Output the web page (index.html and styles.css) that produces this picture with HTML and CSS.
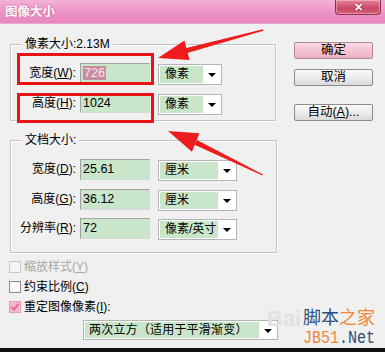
FILE: index.html
```html
<!DOCTYPE html>
<html lang="zh">
<head>
<meta charset="utf-8">
<link rel="stylesheet" href="styles.css">
</head>
<body>
<div class="dialog">
  <div class="titlebar">
    <span class="title">图像大小</span>
    <span class="close">✕</span>
  </div>
  <div class="content">
    <div class="main">
      <div class="group g1">
        <span class="legend">像素大小:2.13M</span>
        <div class="row">
          <span class="label">宽度(<u>W</u>):</span>
          <span class="input"><span class="sel">726</span></span>
          <span class="select s1"><span class="val">像素</span><span class="arrow"></span></span>
        </div>
        <div class="row">
          <span class="label">高度(<u>H</u>):</span>
          <span class="input">1024</span>
          <span class="select s1"><span class="val">像素</span><span class="arrow"></span></span>
        </div>
      </div>
      <div class="group g2">
        <span class="legend">文档大小:</span>
        <div class="row">
          <span class="label">宽度(<u>D</u>):</span>
          <span class="input tall">25.61</span>
          <span class="select s2"><span class="val">厘米</span><span class="arrow"></span></span>
        </div>
        <div class="row">
          <span class="label">高度(<u>G</u>):</span>
          <span class="input tall">36.12</span>
          <span class="select s2"><span class="val">厘米</span><span class="arrow"></span></span>
        </div>
        <div class="row">
          <span class="label">分辨率(<u>R</u>):</span>
          <span class="input tall">72</span>
          <span class="select s2"><span class="val">像素/英寸</span><span class="arrow"></span></span>
        </div>
      </div>
      <div class="checks">
        <div class="check disabled"><span class="box"></span><span>缩放样式(<u>Y</u>)</span></div>
        <div class="check"><span class="box"></span><span>约束比例(<u>C</u>)</span></div>
        <div class="check"><span class="box checked"><svg width="10" height="10" viewBox="0 0 10 10"><path d="M1.5 5 L4 7.5 L8.5 2" fill="none" stroke="#e890b0" stroke-width="2"/></svg></span><span>重定图像像素(<u>I</u>):</span></div>
      </div>
      <span class="select s3"><span class="val">两次立方（适用于平滑渐变）</span><span class="arrow"></span></span>
    </div>
    <div class="buttons">
      <span class="btn primary">确定</span>
      <span class="btn">取消</span>
      <span class="btn auto">自动(<u>A</u>)...</span>
    </div>
  </div>
  <div class="bottomline"></div>

  <div class="mark m1"></div>
  <div class="mark m2"></div>

  <svg class="arrows" width="385" height="352" viewBox="0 0 385 352">
    <polygon fill="#ee1c1c" points="263,29.3 263.4,30.7 185.6,53.4 184.4,48.6"/>
    <polygon fill="#ee1c1c" points="158,58 189.6,60 184.4,40.6"/>
    <polygon fill="#ee1c1c" points="263,174.4 262.4,175.6 194.5,144.8 197,139.9"/>
    <polygon fill="#ee1c1c" points="168,131 191.9,151.7 199.5,133.3"/>
  </svg>

  <div class="watermark">
    <span class="bai">Bai</span>
    <span class="jb"><span class="blue">脚本</span><span class="orange">之家</span></span>
    <span class="net"><span class="orange">JB51</span><span class="blue">.Net</span></span>
  </div>
</div>
</body>
</html>
```

FILE: styles.css
```css
* { box-sizing: border-box; }
html, body { margin: 0; padding: 0; }
body {
  width: 385px;
  height: 352px;
  overflow: hidden;
  background: #f0f0f0;
  font-family: "Liberation Sans", "Noto Sans CJK SC", sans-serif;
  font-size: 12px;
  color: #000;
}
u { text-decoration: underline; text-underline-offset: 1px; }

.dialog {
  position: relative;
  width: 385px;
  height: 352px;
  display: flex;
  flex-direction: column;
  background: #f0f0f0;
}

.titlebar {
  height: 24px;
  flex: none;
  display: flex;
  align-items: flex-start;
  justify-content: space-between;
  background: linear-gradient(#f4b2d6, #ee94c6 50%, #e986bd);
  border-bottom: 1px solid #e8a8cc;
}
.title {
  margin: 4px 0 0 5px;
  color: #fff;
  font-weight: bold;
  font-size: 12.5px;
  line-height: 16px;
  text-shadow: 0 0 2px #c05890;
}
.close {
  width: 46px;
  height: 15px;
  margin-right: 4px;
  border: 1px solid #8a3050;
  border-top: none;
  border-radius: 0 0 4px 4px;
  background: linear-gradient(#e88098, #c84868 60%, #d86078);
  color: #fff;
  font-size: 11px;
  font-weight: bold;
  line-height: 14px;
  text-align: center;
  text-shadow: 0 0 2px #602030;
  box-shadow: inset 0 0 0 1px rgba(255,255,255,0.35);
}

.content {
  flex: 1;
  display: flex;
}
.main {
  width: 286px;
  padding-left: 10px;
  display: flex;
  flex-direction: column;
  align-items: flex-start;
}

.group {
  width: 266px;
  border: 1px solid #c4c4c4;
  box-shadow: 1px 1px 0 #fff, inset 1px 1px 0 #fff;
  display: flex;
  flex-direction: column;
}
.g1 {
  margin-top: 20px;
  height: 77px;
}
.g2 {
  margin-top: 19px;
  height: 113px;
  width: 267px;
}
.legend {
  align-self: flex-start;
  margin: -8px 0 0 11px;
  padding: 0 3px;
  background: #f0f0f0;
  line-height: 14px;
  height: 14px;
}
.g1 .row:first-of-type { margin-top: 12px; }
.g1 .row + .row { margin-top: 10px; }
.g2 .row:first-of-type { margin-top: 12px; }
.g2 .row + .row { margin-top: 8.5px; }

.row {
  display: flex;
  align-items: flex-start;
  height: 20px;
}
.g2 .row { height: 21px; }
.label {
  width: 65px;
  text-align: right;
  line-height: 20px;
  height: 20px;
  white-space: nowrap;
}
.g2 .label { line-height: 21px; }
.input {
  margin-left: 4px;
  width: 70px;
  height: 20px;
  background: #c9e6ca;
  border: 1px solid #a2a2a2;
  border-right-color: #d8d8d8;
  border-bottom-color: #d8d8d8;
  padding-left: 2px;
  line-height: 18px;
  font-size: 12.5px;
}
.input.tall { height: 21px; line-height: 19px; }
.sel {
  background: #c98ba0;
  color: #f4e6ec;
  padding: 0 1px;
}

.select {
  display: flex;
  height: 21px;
  background: #fff;
  border: 1px solid #b4b4b4;
  padding: 1px;
}
.select .val {
  flex: 1;
  background: #c9e6ca;
  line-height: 17px;
  padding-left: 5px;
  white-space: nowrap;
}
.select .arrow {
  width: 17px;
  position: relative;
  background: #fff;
}
.select .arrow::after {
  content: "";
  position: absolute;
  left: 5px;
  top: 7px;
  border-left: 4px solid transparent;
  border-right: 4px solid transparent;
  border-top: 4px solid #000;
}
.s1 { margin: 1px 0 0 8px; width: 64px; }
.s2 { margin: 1px 0 0 8px; width: 79px; }
.s3 { margin: 3px 0 0 73px; width: 195px; height: 20px; }
.s3 .val { padding-left: 4px; line-height: 16px; letter-spacing: 0.2px; }

.checks {
  margin: 4px 0 0 -1px;
  display: flex;
  flex-direction: column;
}
.check {
  height: 20px;
  display: flex;
  align-items: center;
  gap: 3px;
  line-height: 16px;
}
.box {
  width: 12px;
  height: 12px;
  border: 1px solid #8c8c8c;
  background: #fafafa;
  display: flex;
  align-items: center;
  justify-content: center;
}
.box.checked {
  background: #f4b8cc;
  border-color: #e0a0b8;
}
.box.checked svg path { stroke: #e06c94; }
.check.disabled { color: #a8a8a8; }
.check.disabled .box { border-color: #c8c8c8; background: #f4f4f4; }

.buttons {
  margin: 18px 0 0 8px;
  display: flex;
  flex-direction: column;
  width: 79px;
}
.btn {
  height: 17px;
  border: 1px solid #8c8c8c;
  border-radius: 2px;
  background: linear-gradient(#fbfbfb, #ececec 50%, #dadada);
  text-align: center;
  line-height: 15px;
  font-size: 12.5px;
}
.btn + .btn { margin-top: 10px; }
.btn.auto { margin-top: 18px; }
.btn.primary {
  border-color: #b08898;
  background: linear-gradient(#fbdde6, #f5c3d2 50%, #eeb2c4);
}

.bottomline {
  height: 4px;
  flex: none;
  background: #111;
}

.mark {
  position: absolute;
  border: 3px solid #e81414;
  left: 17px;
  width: 137px;
}
.m1 { top: 53px; height: 32px; }
.m2 { top: 93px; height: 30px; }

.arrows {
  position: absolute;
  left: 0;
  top: 0;
  pointer-events: none;
}

.watermark {
  position: absolute;
  left: 267px;
  top: 302px;
  width: 112px;
  height: 44px;
  pointer-events: none;
}
.bai {
  position: absolute;
  left: 0;
  top: 4px;
  font-family: "Liberation Sans", sans-serif;
  font-weight: bold;
  font-size: 22px;
  color: #e2e2e2;
  letter-spacing: 0;
}
.jb {
  position: absolute;
  left: 36px;
  top: 2px;
  font-size: 18px;
  line-height: 24px;
  font-family: "Noto Sans CJK SC", sans-serif;
}
.net {
  position: absolute;
  left: 36px;
  top: 26px;
  font-family: "Liberation Mono", monospace;
  font-size: 15px;
  line-height: 18px;
  transform: scaleY(1.25);
  transform-origin: left top;
}
.blue { color: #2d4d7a; }
.orange { color: #f08838; }
```
